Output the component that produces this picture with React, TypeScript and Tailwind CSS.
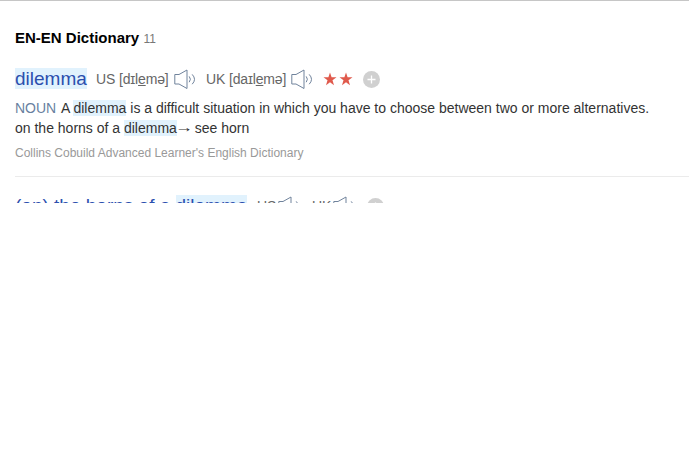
import type { ReactNode } from "react";

function Speaker() {
  return (
    <svg width="23" height="20" viewBox="0 0 23 20" fill="none" stroke="#70839c" strokeWidth="1" className="block shrink-0">
      <path d="M.8 5.5H5L13 1v18.5L5 15H.8z" />
      <path d="M15.2 7.4q2.4 2.8 0 5.8M18.2 5.4q4.6 5 0 9.8" />
    </svg>
  );
}

function Star() {
  return (
    <svg width="16" height="16" viewBox="0 0 16 16" fill="#e05a4c" className="block shrink-0">
      <path d="M8 1.5l1.6 4.8H14.5l-4 3 1.5 5L8 11.3l-4 3 1.5-5-4-3h4.9z" />
    </svg>
  );
}

function AddButton() {
  return (
    <svg width="17" height="17" viewBox="0 0 17 17" className="block shrink-0">
      <circle cx="8.5" cy="8.5" r="8.5" fill="#d0d0d0" />
      <path d="M4.5 8.5h8M8.5 4.5v8" stroke="#fff" strokeWidth="1.3" />
    </svg>
  );
}

function Mark({ children }: { children: ReactNode }) {
  return <span className="bg-[#e1f2fd]">{children}</span>;
}

export default function App() {
  return (
    <main className="h-[465px] w-full overflow-hidden whitespace-nowrap border-t border-[#c6c6c6] bg-white pl-[15px] font-['Liberation_Sans',Arial,sans-serif] text-[#333]">
      <header className="mt-[27px] flex h-[20px] items-baseline leading-[20px]">
        <h1 className="w-[128.5px] text-[15px] font-bold text-black">EN-EN Dictionary</h1>
        <span className="text-[12px] text-[#777]">11</span>
      </header>

      <section className="mt-[20px] h-[109px] border-b border-[#ebebeb]">
        <div className="flex h-[22px] items-center text-[14px] leading-[22px] text-[#666]">
          <h2 className="w-[81px] text-[19px] text-[#2c4fae]"><Mark>dilemma</Mark></h2>
          <span className="w-[78px] tracking-[-0.15px]">US [dɪl<u>e</u>mə]</span>
          <div className="w-[32px]"><Speaker /></div>
          <span className="w-[85px] tracking-[-0.15px]">UK [daɪl<u>e</u>mə]</span>
          <div className="w-[31px]"><Speaker /></div>
          <div className="flex w-[41px]"><Star /><Star /></div>
          <AddButton />
        </div>
        <p className="mt-[8px] flex h-[20px] text-[14px] leading-[20px]">
          <span className="w-[46px] text-[#687f9f]">NOUN</span>
          <span>A <Mark>dilemma</Mark> is a difficult situation in which you have to choose between two or more alternatives.</span>
        </p>
        <p className="text-[14px] leading-[20px]">
          on the horns of a <Mark>dilemma</Mark><span className="inline-block -translate-y-px scale-x-130">→</span> see horn
        </p>
        <p className="mt-[6px] text-[12px] leading-[18px] text-[#999]">Collins Cobuild Advanced Learner's English Dictionary</p>
      </section>

      <section className="h-[26px] overflow-hidden pt-[18px]">
        <div className="flex h-[22px] items-center text-[14px] leading-[22px] text-[#666]">
          <h2 className="w-[242px] text-[19px] text-[#2c4fae]">(on) the horns of a <Mark>dilemma</Mark></h2>
          <span className="w-[21px]">US</span>
          <div className="w-[34px]"><Speaker /></div>
          <span className="w-[21px]">UK</span>
          <div className="w-[34px]"><Speaker /></div>
          <AddButton />
        </div>
      </section>
    </main>
  );
}
